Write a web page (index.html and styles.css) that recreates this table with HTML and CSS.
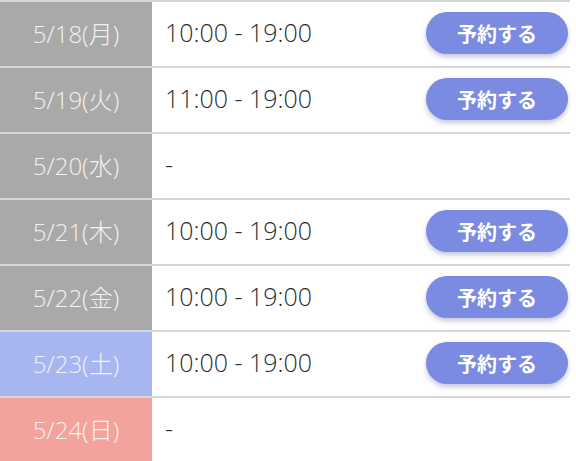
FILE: index.html
```html
<!DOCTYPE html>
<html lang="ja">
<head>
<meta charset="utf-8">
<link rel="stylesheet" href="styles.css">
</head>
<body>
<div class="schedule">
  <div class="row"><div class="date">5/18(月)</div><div class="time">10:00 - 19:00</div><button class="btn">予約する</button></div>
  <div class="row"><div class="date">5/19(火)</div><div class="time">11:00 - 19:00</div><button class="btn">予約する</button></div>
  <div class="row"><div class="date">5/20(水)</div><div class="time">-</div></div>
  <div class="row"><div class="date">5/21(木)</div><div class="time">10:00 - 19:00</div><button class="btn">予約する</button></div>
  <div class="row"><div class="date">5/22(金)</div><div class="time">10:00 - 19:00</div><button class="btn">予約する</button></div>
  <div class="row"><div class="date sat">5/23(土)</div><div class="time">10:00 - 19:00</div><button class="btn">予約する</button></div>
  <div class="row"><div class="date sun">5/24(日)</div><div class="time">-</div></div>
</div>
</body>
</html>
```
FILE: styles.css
```css
html, body {
  margin: 0;
  padding: 0;
  background: #fff;
}
body {
  font-family: "Open Sans", "Noto Sans CJK JP", sans-serif;
}
.schedule {
  width: 570px;
}
.row {
  display: flex;
  align-items: center;
  height: 64px;
  border-top: 2px solid #d6d6d6;
}
.date {
  width: 152px;
  height: 100%;
  box-sizing: border-box;
  padding-bottom: 4px;
  flex-shrink: 0;
  display: flex;
  align-items: center;
  justify-content: center;
  background: #a9a9a9;
  color: #f2f2f2;
  font-size: 24px;
  font-weight: 300;
  font-family: "Open Sans", "Noto Sans CJK JP", sans-serif;
}
.date.sat { background: #a7b5f1; }
.date.sun { background: #f3a39c; }
.time {
  flex: 1;
  padding-left: 13px;
  padding-bottom: 4px;
  font-size: 25px;
  font-weight: 350;
  color: #2e2e2e;
  font-family: "Open Sans", "Noto Sans CJK JP", sans-serif;
}
.btn {
  width: 142px;
  height: 42px;
  margin-right: 2px;
  margin-bottom: 2px;
  border: none;
  border-radius: 21px;
  background: #7a8be1;
  color: #fff;
  font-family: "Noto Sans CJK JP", sans-serif;
  font-weight: 700;
  font-size: 20px;
  box-shadow: 0 3px 5px rgba(60, 70, 140, 0.3);
}
```
